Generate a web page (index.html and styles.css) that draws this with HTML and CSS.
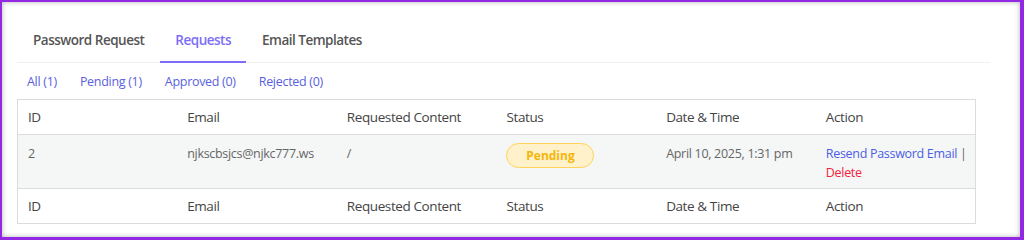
FILE: index.html
```html
<!DOCTYPE html>
<html lang="en">
<head>
    <meta charset="UTF-8">
    <meta name="viewport" content="width=device-width, initial-scale=1.0">
    <title>Requests</title>
    <link rel="stylesheet" href="styles.css">
</head>
<body>
    <div class="frame">
        <div class="tabs">
            <a class="tab">Password Request</a>
            <a class="tab active">Requests</a>
            <a class="tab">Email Templates</a>
        </div>

        <div class="filters">
            <a>All (1)</a>
            <a>Pending (1)</a>
            <a>Approved (0)</a>
            <a>Rejected (0)</a>
        </div>

        <table class="requests">
            <thead>
                <tr>
                    <th>ID</th>
                    <th>Email</th>
                    <th>Requested Content</th>
                    <th>Status</th>
                    <th>Date &amp; Time</th>
                    <th>Action</th>
                </tr>
            </thead>
            <tbody>
                <tr>
                    <td>2</td>
                    <td>njkscbsjcs@njkc777.ws</td>
                    <td>/</td>
                    <td><span class="badge pending">Pending</span></td>
                    <td>April 10, 2025, 1:31 pm</td>
                    <td><a class="link">Resend Password Email</a> | <a class="link danger">Delete</a></td>
                </tr>
            </tbody>
            <tfoot>
                <tr>
                    <th>ID</th>
                    <th>Email</th>
                    <th>Requested Content</th>
                    <th>Status</th>
                    <th>Date &amp; Time</th>
                    <th>Action</th>
                </tr>
            </tfoot>
        </table>
    </div>
</body>
</html>
```

FILE: styles.css
```css
html, body { margin: 0; height: 100%; }
body { font-family: 'Open Sans', 'Noto Sans', sans-serif; background: #9227e4; padding: 2px 4px 3px 2px; box-sizing: border-box; }
.frame { height: 100%; background: #fff; box-shadow: inset 0 0 5px rgba(0,0,0,0.3); padding: 0 44px 0 15px; box-sizing: border-box; }

.tabs { display: flex; gap: 1px; padding: 29px 0 0 0; border-bottom: 1px solid #f0f0f0; margin-right: -14px; }
.tab { font-size: 13.5px; font-weight: 600; letter-spacing: -0.5px; color: #555; padding: 0 15px 12px; border-bottom: 2px solid transparent; margin-bottom: -1px; }
.tab:first-child { padding-left: 16px; }
.tab.active { color: #7d6ef8; border-bottom-color: #7d6ef8; }

.filters { display: flex; gap: 23px; padding: 10px 0 0 10px; height: 36px; box-sizing: border-box; font-size: 12.5px; letter-spacing: -0.3px; }
.filters a { color: #5a5fe0; }

.requests { width: 100%; border-collapse: collapse; border: 1px solid #dcdcdc; table-layout: fixed; font-size: 13.5px; letter-spacing: -0.4px; }
.requests th { font-weight: 400; color: #444; text-align: left; padding: 0 10px; height: 34px; }
.requests thead tr { border-bottom: 1px solid #dcdcdc; }
.requests tfoot tr { border-top: 1px solid #dcdcdc; }
.requests td { background: #f5f6f6; color: #666; font-size: 12.5px; letter-spacing: -0.3px; padding: 9px 6px 6px 10px; vertical-align: top; line-height: 19px; height: 38px; }
.badge { display: inline-block; width: 86px; text-align: center; border-radius: 13px; font-size: 12px; font-weight: 700; letter-spacing: 0; padding: 3px 0; line-height: 17px; margin-top: -1px; }
.pending { background: #fff1c9; border: 1px solid #ffd35c; color: #f5b60a; }
.link { color: #4b5ee6; }
.link.danger { color: #f5223f; }
```
